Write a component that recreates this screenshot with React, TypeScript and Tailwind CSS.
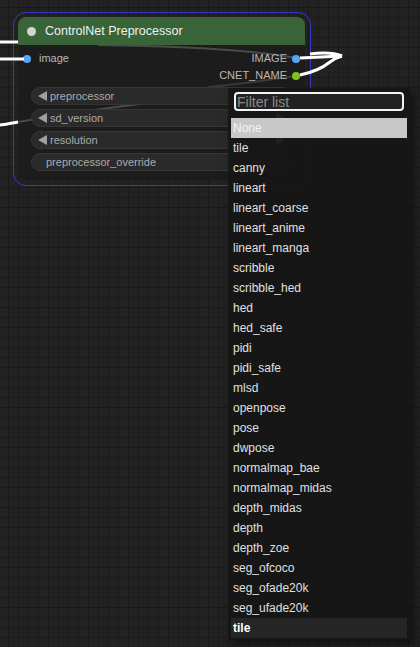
import React from "react";

const options = [
  "None",
  "tile",
  "canny",
  "lineart",
  "lineart_coarse",
  "lineart_anime",
  "lineart_manga",
  "scribble",
  "scribble_hed",
  "hed",
  "hed_safe",
  "pidi",
  "pidi_safe",
  "mlsd",
  "openpose",
  "pose",
  "dwpose",
  "normalmap_bae",
  "normalmap_midas",
  "depth_midas",
  "depth",
  "depth_zoe",
  "seg_ofcoco",
  "seg_ofade20k",
  "seg_ufade20k",
  "tile",
];

const widgets = [
  { name: "preprocessor", combo: true },
  { name: "sd_version", combo: true },
  { name: "resolution", combo: true },
  { name: "preprocessor_override", combo: false },
];

const LeftArrow = () => (
  <svg width="9" height="10" viewBox="0 0 9 10" className="shrink-0">
    <path d="M0 5 L9 0 L9 10 Z" fill="#a0a0a0" />
  </svg>
);

const RightArrow = () => (
  <svg width="9" height="10" viewBox="0 0 9 10" className="shrink-0">
    <path d="M9 5 L0 0 L0 10 Z" fill="#a0a0a0" />
  </svg>
);

const Widget: React.FC<{ name: string; combo: boolean }> = ({ name, combo }) => (
  <div className="relative flex h-[18px] items-center rounded-full border border-[#353535] bg-[#2a2a2a] text-[11px] leading-none text-[#ababab]">
    {combo ? (
      <div className="flex items-center gap-[3px] pl-[6px]">
        <LeftArrow />
        <span>{name}</span>
      </div>
    ) : (
      <span className="pl-[14px]">{name}</span>
    )}
    {combo && (
      <div className="ml-auto flex items-center pr-[6px]">
        <RightArrow />
      </div>
    )}
  </div>
);

export default function App() {
  return (
    <div className="relative h-[647px] w-[420px] overflow-hidden bg-[#222222] bg-[linear-gradient(#1b1b1b_1px,transparent_1px),linear-gradient(90deg,#1b1b1b_1px,transparent_1px)] bg-[size:10px_10px] bg-[position:-2px_-3px] font-['Liberation_Sans',Arial,sans-serif]">
      {/* big grid lines */}
      <div className="absolute inset-0 bg-[linear-gradient(#191919_1px,transparent_1px),linear-gradient(90deg,#191919_1px,transparent_1px)] bg-[size:100px_100px] bg-[position:8px_7px]" />

      {/* selection outline */}
      <div className="absolute left-[13px] top-[12px] h-[174px] w-[298px] rounded-[13px] border border-[#3838c8]" />

      {/* node */}
      <div className="absolute left-[18px] top-[17px] h-[163px] w-[287px] rounded-[8px] bg-[#1c1c1c]">
        {/* faint links behind widgets */}
        <svg className="absolute inset-0" width="287" height="163">
          <path d="M80 28 C 160 29, 230 32, 278 41" stroke="#4a4a4a" strokeWidth="2" fill="none" />
          <path d="M190 70 C 230 66, 255 62, 278 59" stroke="#3a3a3a" strokeWidth="2" fill="none" />
          <path d="M0 105 C 40 98, 80 92, 130 86" stroke="#4a4a4a" strokeWidth="2" fill="none" />
        </svg>

        <div className="relative flex h-[28px] items-center rounded-t-[8px] bg-[#386438]">
          <div className="ml-[9px] h-[9px] w-[9px] rounded-full bg-[#d4d4d4]" />
          <span className="ml-[9px] text-[12.5px] text-[#f0f0f0]">ControlNet Preprocessor</span>
        </div>

        <div className="relative grid grid-rows-[17px_17px] pt-[5px] text-[11px] text-[#b8b8b8]">
          <div className="flex items-center justify-between">
            <div className="flex items-center">
              <div className="ml-[5px] h-[8px] w-[8px] rounded-full bg-[#52a8f2]" />
              <span className="ml-[8px]">image</span>
            </div>
            <div className="flex items-center">
              <span className="mr-[5px]">IMAGE</span>
              <div className="mr-[5px] h-[8px] w-[8px] rounded-full bg-[#52a8f2]" />
            </div>
          </div>
          <div className="flex items-center justify-end">
            <span className="mr-[5px]">CNET_NAME</span>
            <div className="mr-[5px] h-[8px] w-[8px] rounded-full bg-[#7ec21e]" />
          </div>
        </div>

        <div className="relative mx-[13px] mt-[3px] flex flex-col gap-[4px]">
          {widgets.map((w) => (
            <Widget key={w.name} {...w} />
          ))}
        </div>
      </div>

      {/* links */}
      <svg className="absolute inset-0" width="420" height="647">
        <path d="M0 42 L18 42" stroke="#ffffff" strokeWidth="3" fill="none" />
        <path d="M0 59 L24 59" stroke="#ffffff" strokeWidth="3" fill="none" />
        <path d="M0 125 C 8 124, 12 123, 18 122" stroke="#ffffff" strokeWidth="3" fill="none" />
        <path d="M300 58 L342 56" stroke="#ffffff" strokeWidth="3" fill="none" />
        <path d="M310 54 C 325 52, 335 53, 342 56" stroke="#ffffff" strokeWidth="3" fill="none" />
        <path d="M300 75 C 315 72, 325 66, 330 62 C 334 59, 338 57, 342 56" stroke="#ffffff" strokeWidth="3" fill="none" />
      </svg>

      {/* context menu */}
      <div className="absolute left-[228px] top-[88px] w-[182px] bg-[#161616]/[0.92] pb-[2px] shadow-[4px_4px_8px_rgba(0,0,0,0.5)]">
        <div className="px-[6px] pt-[4px]">
          <div className="flex h-[19px] items-center rounded-[4px] border-2 border-[#f2f2f2] bg-[#222222] px-[1px] text-[14px] leading-none text-[#8a8a8a]">
            Filter list
          </div>
        </div>
        <div className="mt-[7px] flex flex-col px-[3px]">
          {options.map((o, i) => (
            <div
              key={i}
              className={
                i === 0
                  ? "flex h-[20px] items-center bg-[#c8c8c8] pl-[2px] text-[12px] text-[#f4f4f4]"
                  : i === options.length - 1
                  ? "flex h-[20px] items-center bg-[#262626] pl-[2px] text-[12px] font-bold text-[#ffffff]"
                  : "flex h-[20px] items-center pl-[2px] text-[12px] text-[#e0e0e0]"
              }
            >
              {o}
            </div>
          ))}
        </div>
      </div>
    </div>
  );
}
